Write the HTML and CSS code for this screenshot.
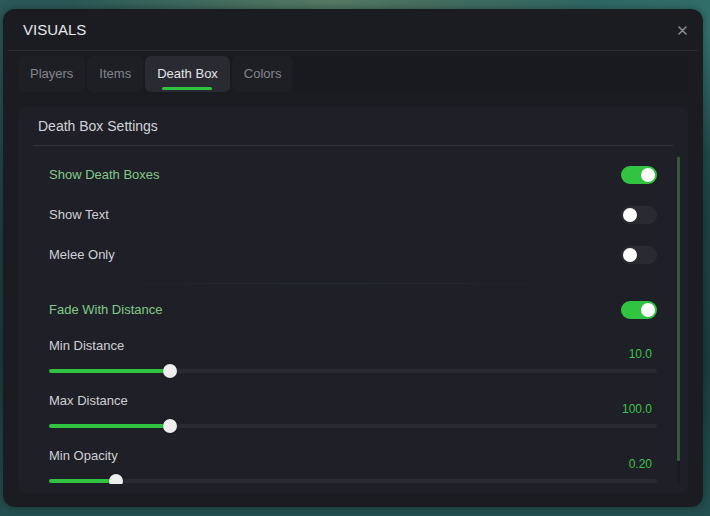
FILE: index.html
```html
<!DOCTYPE html>
<html lang="en">
<head>
<meta charset="utf-8">
<title>Visuals</title>
<link rel="stylesheet" href="styles.css">
</head>
<body>
<div class="window">
  <header class="win-head">
    <span class="win-title">VISUALS</span>
    <button class="close" aria-label="Close">
      <svg width="9" height="9" viewBox="0 0 9 9"><path d="M1 1L8 8M8 1L1 8" stroke="#8d8e93" stroke-width="1.5" stroke-linecap="round"/></svg>
    </button>
  </header>
  <nav class="tabs">
    <div class="tab">Players</div>
    <div class="tab">Items</div>
    <div class="tab active">Death Box</div>
    <div class="tab">Colors</div>
  </nav>
  <section class="panel">
    <h2 class="panel-title">Death Box Settings</h2>
    <div class="scroll-wrap">
      <div class="scroll-content">
        <div class="row"><span class="label on">Show Death Boxes</span><span class="toggle on"><span class="knob"></span></span></div>
        <div class="row"><span class="label">Show Text</span><span class="toggle"><span class="knob"></span></span></div>
        <div class="row"><span class="label">Melee Only</span><span class="toggle"><span class="knob"></span></span></div>
        <div class="divider"></div>
        <div class="row"><span class="label on">Fade With Distance</span><span class="toggle on"><span class="knob"></span></span></div>
        <div class="slider">
          <div class="slider-head"><span class="label">Min Distance</span><span class="value">10.0</span></div>
          <div class="track-wrap"><div class="track"><div class="fill" style="width:19.9%"></div><div class="thumb"></div></div></div>
        </div>
        <div class="slider">
          <div class="slider-head"><span class="label">Max Distance</span><span class="value">100.0</span></div>
          <div class="track-wrap"><div class="track"><div class="fill" style="width:19.9%"></div><div class="thumb"></div></div></div>
        </div>
        <div class="slider">
          <div class="slider-head"><span class="label">Min Opacity</span><span class="value">0.20</span></div>
          <div class="track-wrap"><div class="track"><div class="fill" style="width:11%"></div><div class="thumb"></div></div></div>
        </div>
      </div>
      <div class="scrollbar"><div class="sb-thumb"></div></div>
    </div>
  </section>
</div>
</body>
</html>
```
FILE: styles.css
```css
* { box-sizing: border-box; }
html, body { margin: 0; height: 100%; }
body {
  width: 710px;
  height: 516px;
  overflow: hidden;
  padding: 9px 7px 9px 3px;
  font-family: "Liberation Sans", Arial, sans-serif;
  background:
    radial-gradient(ellipse 260px 60px at 330px 0px, rgba(120,150,110,0.55), rgba(120,150,110,0) 100%),
    radial-gradient(ellipse 300px 120px at 700px 30px, rgba(60,140,130,0.5), rgba(60,140,130,0) 100%),
    linear-gradient(180deg, #2b5a58 0%, #1f4344 40%, #1c3c3e 70%, #24504f 100%);
}
.window {
  width: 700px;
  height: 498px;
  background: #1b1c22;
  border-radius: 12px;
  padding-bottom: 14px;
  display: flex;
  flex-direction: column;
  box-shadow: 0 0 8px rgba(0,0,0,0.35);
}
.win-head {
  height: 42px;
  margin: 0 5px;
  padding: 0 11px 0 15px;
  border-bottom: 1px solid #2b2c33;
  display: flex;
  align-items: center;
  justify-content: space-between;
  flex: none;
}
.win-title {
  color: #e8e8ea;
  font-size: 15px;
  letter-spacing: 0;
}
.close {
  background: none;
  border: 0;
  padding: 0;
  width: 9px;
  height: 9px;
  display: flex;
  margin-top: 1px;
}
.tabs {
  margin: 5px 15px 0;
  height: 36px;
  background: #191a1f;
  border-radius: 6px;
  display: flex;
  gap: 2px;
  flex: none;
}
.tab {
  position: relative;
  height: 36px;
  padding: 0 12px 2px;
  border-radius: 6px;
  background: #1e1f25;
  color: #85868c;
  font-size: 13px;
  display: flex;
  align-items: center;
}
.tab.active {
  background: #2a2b32;
  color: #e4e4e6;
}
.tab.active::after {
  content: "";
  position: absolute;
  left: 17px;
  right: 18px;
  bottom: 2px;
  height: 3px;
  border-radius: 2px;
  background: #2fc33f;
}
.panel {
  margin: 15px 15px 0;
  height: 386px;
  background: #1f2027;
  border-radius: 8px;
  padding: 0 8px 9px 15px;
  display: flex;
  flex-direction: column;
  flex: none;
}
.panel-title {
  margin: 0 7px 0 0;
  height: 39px;
  padding-left: 5px;
  font-weight: normal;
  font-size: 14px;
  color: #d2d3d6;
  border-bottom: 1px solid #34353c;
  display: flex;
  align-items: center;
  flex: none;
}
.scroll-wrap {
  flex: 1;
  display: flex;
  min-height: 0;
}
.scroll-content {
  flex: 1;
  overflow: hidden;
  padding: 9px 20px 0 16px;
}
.scrollbar {
  width: 3px;
  margin-top: 11px;
  background: #1a1b20;
  flex: none;
}
.sb-thumb {
  height: 304px;
  background: #365a3d;
  border-radius: 1px;
}
.row {
  height: 40px;
  display: flex;
  align-items: center;
  justify-content: space-between;
}
.label {
  font-size: 13px;
  color: #cfd0d4;
  line-height: 16px;
}
.label.on {
  color: #82c98a;
}
.toggle {
  width: 36px;
  height: 18px;
  border-radius: 9px;
  background: #2a2b32;
  display: flex;
  align-items: center;
  padding: 0 2px;
}
.toggle.on {
  background: #31c441;
  justify-content: flex-end;
}
.knob {
  width: 14px;
  height: 14px;
  border-radius: 50%;
  background: #ffffff;
}
.divider {
  height: 1px;
  margin: 8px 0 6px;
  background: linear-gradient(90deg, rgba(40,70,50,0) 8%, rgba(40,75,55,0.3) 45%, rgba(40,70,50,0) 88%);
}
.slider {
  margin-top: 8px;
}
.slider + .slider {
  margin-top: 15px;
}
.slider-head {
  height: 24px;
  display: flex;
  justify-content: space-between;
  align-items: flex-end;
}
.slider-head .label {
  align-self: flex-start;
}
.value {
  font-size: 12px;
  line-height: 16px;
  color: #3cc24b;
  padding-right: 5px;
}
.track-wrap {
  margin-top: 2px;
  height: 14px;
  display: flex;
  align-items: center;
}
.track {
  flex: 1;
  height: 4px;
  border-radius: 2px;
  background: #2a2b32;
  display: flex;
  align-items: center;
}
.fill {
  height: 4px;
  border-radius: 2px;
  background: #2fc33f;
}
.thumb {
  flex: none;
  width: 14px;
  height: 14px;
  margin-left: -7px;
  border-radius: 50%;
  background: #eeeeee;
  box-shadow: 0 0 2px rgba(0,0,0,0.5);
}
```
